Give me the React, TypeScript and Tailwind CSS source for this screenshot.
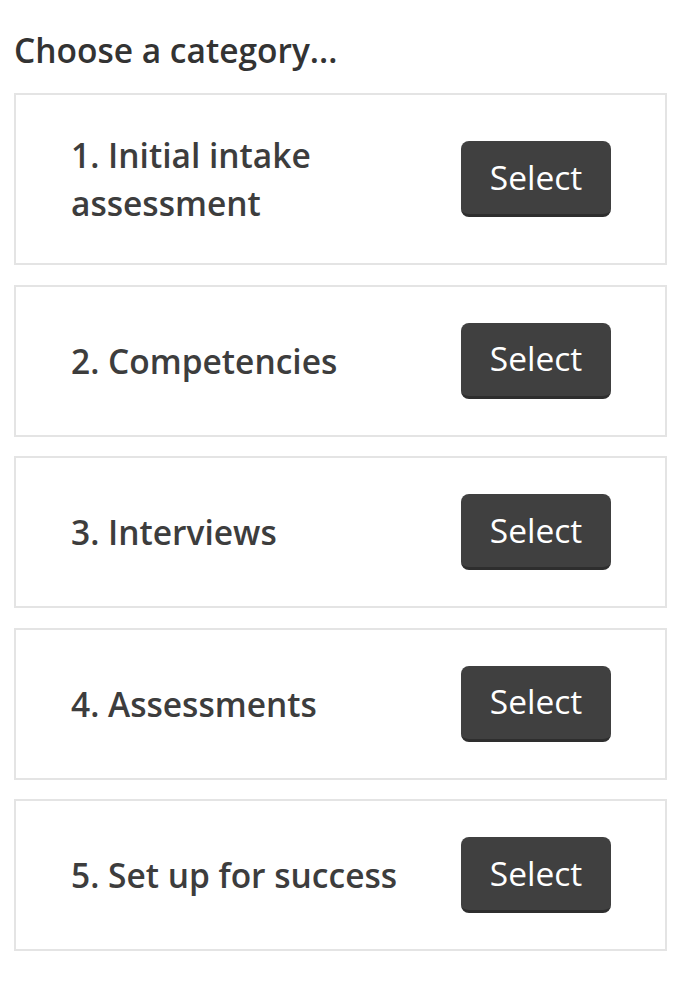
const categories = [
  '1. Initial intake assessment',
  '2. Competencies',
  '3. Interviews',
  '4. Assessments',
  '5. Set up for success',
];

export default function App() {
  return (
    <div
      className="min-h-[993px] bg-white pl-[14px] pr-[8px] pt-[26px]"
      style={{ fontFamily: '"Open Sans", "Liberation Sans", sans-serif' }}
    >
      <h2 className="text-[33.5px] font-semibold leading-[48px] text-[#333333] mb-[19px]">
        Choose a category...
      </h2>

      <div className="flex flex-col gap-[19.5px]">
        {categories.map((name) => (
          <div
            key={name}
            className="flex items-center gap-[20px] border-2 border-[#e4e4e4] pl-[55px] pr-[54px] py-[36px] min-h-[152px]"
          >
            {/* Category title */}
            <div className="flex-1 text-[33.5px] font-semibold leading-[48px] text-[#3d3d3d]">
              {name}
            </div>
            <button
              type="button"
              className="w-[150px] h-[76px] shrink-0 rounded-[8px] bg-[#404040] border-b-[3px] border-[#2e2e2e] text-white text-[33.5px] leading-none"
            >
              Select
            </button>
          </div>
        ))}
      </div>
    </div>
  );
}
